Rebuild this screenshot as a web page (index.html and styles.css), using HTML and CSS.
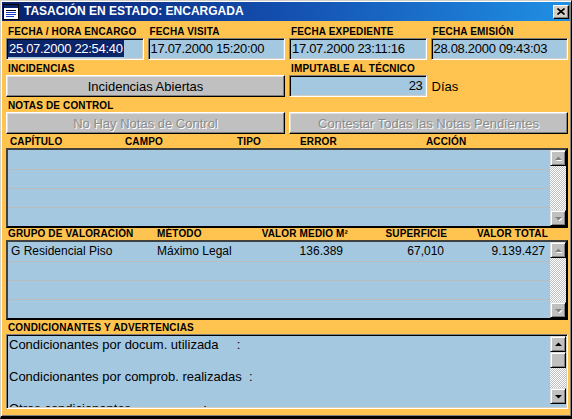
FILE: index.html
```html
<!DOCTYPE html>
<html lang="es">
<head>
<meta charset="utf-8">
<title>Tasación en estado: Encargada</title>
<link rel="stylesheet" href="styles.css">
</head>
<body>
<div class="window">
  <div class="titlebar">
    <svg class="app-icon" width="16" height="16" viewBox="0 0 16 16">
      <rect x="0.5" y="0.5" width="15" height="15" fill="#fff" stroke="#000"/>
      <rect x="1" y="1" width="14" height="3" fill="#0a246a"/>
      <rect x="3" y="6" width="10" height="1" fill="#000"/>
      <rect x="3" y="8" width="10" height="1" fill="#1c3cc8"/>
      <rect x="3" y="10" width="10" height="1" fill="#1c3cc8"/>
      <rect x="3" y="12" width="8" height="1" fill="#1c3cc8"/>
    </svg>
    <span class="title">TASACIÓN EN ESTADO: ENCARGADA</span>
    <div class="close-btn">
      <svg width="8" height="7" viewBox="0 0 8 7"><path d="M0.5 0.5 L7.5 6.5 M7.5 0.5 L0.5 6.5" stroke="#000" stroke-width="1.6" fill="none"/></svg>
    </div>
  </div>

  <div class="content">
    <div class="row4">
      <div class="field">
        <div class="label">FECHA / HORA ENCARGO</div>
        <div class="input date"><span class="selected">25.07.2000 22:54:40</span></div>
      </div>
      <div class="field">
        <div class="label">FECHA VISITA</div>
        <div class="input date">17.07.2000 15:20:00</div>
      </div>
      <div class="field">
        <div class="label">FECHA EXPEDIENTE</div>
        <div class="input date">17.07.2000 23:11:16</div>
      </div>
      <div class="field">
        <div class="label">FECHA EMISIÓN</div>
        <div class="input date">28.08.2000 09:43:03</div>
      </div>
    </div>

    <div class="row4 gap-top">
      <div class="field span2">
        <div class="label">INCIDENCIAS</div>
        <div class="btn">Incidencias Abiertas</div>
      </div>
      <div class="field">
        <div class="label">IMPUTABLE AL TÉCNICO</div>
        <div class="input date num">23</div>
      </div>
      <div class="field">
        <div class="label"></div>
        <div class="dias">Días</div>
      </div>
    </div>

    <div class="label gap-top">NOTAS DE CONTROL</div>
    <div class="row2">
      <div class="btn disabled">No Hay Notas de Control</div>
      <div class="btn disabled">Contestar Todas las Notas Pendientes</div>
    </div>

    <div class="grid-head head1">
      <span>CAPÍTULO</span><span>CAMPO</span><span>TIPO</span><span>ERROR</span><span>ACCIÓN</span>
    </div>
    <div class="listbox">
      <div class="rows">
        <div class="row"></div>
        <div class="row"></div>
        <div class="row"></div>
        <div class="row"></div>
      </div>
      <div class="vscroll">
        <div class="sbtn"><svg width="7" height="5" viewBox="0 0 7 5"><path d="M3.5 0.5 L7 4 L0 4 Z" class="arrow-off"/></svg></div>
        <div class="track"></div>
        <div class="sbtn"><svg width="7" height="5" viewBox="0 0 7 5"><path d="M0 1 L7 1 L3.5 4.5 Z" class="arrow-off"/></svg></div>
      </div>
    </div>

    <div class="grid-head head2">
      <span>GRUPO DE VALORACIÓN</span><span>MÉTODO</span><span class="r">VALOR MEDIO M²</span><span class="r">SUPERFICIE</span><span class="r">VALOR TOTAL</span>
    </div>
    <div class="listbox">
      <div class="rows">
        <div class="row data2">
          <span>G Residencial Piso</span><span>Máximo Legal</span><span class="r">136.389</span><span class="r">67,010</span><span class="r">9.139.427</span>
        </div>
        <div class="row"></div>
        <div class="row"></div>
        <div class="row"></div>
      </div>
      <div class="vscroll">
        <div class="sbtn"><svg width="7" height="5" viewBox="0 0 7 5"><path d="M3.5 0.5 L7 4 L0 4 Z" class="arrow-off"/></svg></div>
        <div class="track"></div>
        <div class="sbtn"><svg width="7" height="5" viewBox="0 0 7 5"><path d="M0 1 L7 1 L3.5 4.5 Z" class="arrow-off"/></svg></div>
      </div>
    </div>

    <div class="label gap-top2">CONDICIONANTES Y ADVERTENCIAS</div>
    <div class="memo">
      <div class="memo-text">Condicionantes por docum. utilizada     :

Condicionantes por comprob. realizadas  :

Otros condicionantes                    :</div>
      <div class="vscroll memo-scroll">
        <div class="sbtn"><svg width="7" height="5" viewBox="0 0 7 5"><path d="M3.5 0.5 L7 4 L0 4 Z" fill="#000"/></svg></div>
        <div class="sbtn thumb"></div>
        <div class="track"></div>
        <div class="sbtn"><svg width="7" height="5" viewBox="0 0 7 5"><path d="M0 1 L7 1 L3.5 4.5 Z" fill="#000"/></svg></div>
      </div>
    </div>
  </div>
</div>
</body>
</html>
```

FILE: styles.css
```css
* { box-sizing: border-box; }

html, body {
  margin: 0;
  padding: 0;
  background: #000;
}

body {
  font-family: "Liberation Sans", Arial, sans-serif;
  color: #000;
}

.window {
  width: 572px;
  height: 419px;
  display: flex;
  flex-direction: column;
  background: #ffc450;
  border-style: solid;
  border-width: 1px 1px 3px 1px;
  border-color: #d4d0c8 #000 #000 #d4d0c8;
  box-shadow: inset 1px 1px 0 #fff, inset -1px -1px 0 #808080;
  padding: 1px 1px 1px 1px;
}

.titlebar {
  height: 19px;
  flex: none;
  display: flex;
  align-items: center;
  background: linear-gradient(to right, #08216a 0%, #0d3690 25%, #1450b0 50%, #2090e4 100%);
  padding-left: 1px;
}

.app-icon { flex: none; }

.title {
  margin-left: 5px;
  color: #fff;
  font: bold 12px/19px "Liberation Sans", Arial, sans-serif;
  white-space: nowrap;
  flex: 1;
}

.close-btn {
  width: 16px;
  height: 14px;
  margin-right: 1px;
  background: #d4d0c8;
  border: 1px solid;
  border-color: #fff #000 #000 #fff;
  box-shadow: inset -1px -1px 0 #808080;
  display: flex;
  align-items: center;
  justify-content: center;
}

.content {
  flex: 1;
  display: flex;
  flex-direction: column;
  padding: 5px 2px 0 4px;
}

.label {
  font: bold 10px/12px "Liberation Sans", Arial, sans-serif;
  letter-spacing: 0.15px;
  height: 12px;
  padding-left: 2px;
  white-space: nowrap;
}

.gap-top { margin-top: 3px; }
.gap-top2 { margin-top: 2px; }

.row4 {
  display: grid;
  grid-template-columns: repeat(4, 1fr);
  column-gap: 4px;
}

.span2 { grid-column: span 2; }

.row2 {
  display: grid;
  grid-template-columns: 1fr 1fr;
  column-gap: 4px;
}

.input {
  height: 22px;
  background: #a4c8e0;
  border: 1px solid;
  border-color: #808080 #fff #fff #808080;
  box-shadow: inset 1px 1px 0 #000, inset -1px -1px 0 #d4d0c8;
  padding: 1px 1px 0 1px;
  white-space: nowrap;
  overflow: hidden;
}

.date {
  font: 13px/18px "Liberation Sans", Arial, sans-serif;
  letter-spacing: -0.3px;
  padding-left: 2px;
}

.num {
  text-align: right;
  padding-right: 3px;
}

.selected {
  display: inline-block;
  background: #0a246a;
  color: #fff;
  line-height: 17px;
  margin-left: -1px;
  padding: 0 1px;
}

.btn {
  height: 22px;
  background: #c0c0c0;
  border: 1px solid;
  border-color: #fff #000 #000 #fff;
  box-shadow: inset -1px -1px 0 #808080, inset 1px 1px 0 #dfdfdf;
  font: 13px/18px "Liberation Sans", Arial, sans-serif;
  text-align: center;
  padding-top: 2px;
  white-space: nowrap;
}

.btn.disabled {
  color: #8c8c8c;
  text-shadow: 1px 1px 0 #fff;
}

.dias {
  font: 13px/18px "Liberation Sans", Arial, sans-serif;
  padding: 3px 0 0 1px;
}

.grid-head {
  display: grid;
  height: 14px;
  padding-top: 2px;
  font: bold 10px/12px "Liberation Sans", Arial, sans-serif;
  letter-spacing: 0.15px;
  white-space: nowrap;
}

.head1 {
  grid-template-columns: 115px 112px 63px 126px 1fr;
  padding-left: 4px;
}

.head2 {
  height: 12px;
  padding-top: 0;
  grid-template-columns: 149px 99px 92px 99px 101px;
  padding-left: 2px;
}

.r { text-align: right; }

.listbox {
  height: 80px;
  flex: none;
  display: flex;
  background: #a4c8e0;
  border: 2px solid;
  border-color: #404040 #000 #000 #404040;
}

.rows {
  flex: 1;
  display: flex;
  flex-direction: column;
}

.row {
  height: 19px;
  flex: none;
}

.row + .row { border-top: 1px solid #bcbcbc; }

.data2 {
  display: grid;
  grid-template-columns: 146px 99px 87px 101px 101px;
  font: 12px/18px "Liberation Sans", Arial, sans-serif;
  padding-left: 3px;
  white-space: nowrap;
}

.vscroll {
  width: 16px;
  flex: none;
  display: flex;
  flex-direction: column;
}

.sbtn {
  width: 16px;
  height: 16px;
  flex: none;
  background: #c0c0c0;
  border: 1px solid;
  border-color: #dfdfdf #000 #000 #dfdfdf;
  box-shadow: inset 1px 1px 0 #fff, inset -1px -1px 0 #808080;
  display: flex;
  align-items: center;
  justify-content: center;
}

.track {
  flex: 1;
  background-color: #fff;
  background-image: conic-gradient(#c0c0c0 0 25%, #fff 0 50%, #c0c0c0 0 75%, #fff 0);
  background-size: 2px 2px;
}

.arrow-off {
  fill: #808080;
  filter: drop-shadow(1px 1px 0 #fff);
}

.memo {
  height: 75px;
  flex: none;
  display: flex;
  background: #a4c8e0;
  border: 1px solid;
  border-color: #808080 #fff #fff #808080;
  box-shadow: inset 1px 1px 0 #000, inset -1px -1px 0 #d4d0c8;
  padding: 1px 1px 1px 1px;
  overflow: hidden;
}

.memo-text {
  flex: 1;
  padding: 1px 0 0 1px;
  font: 13px/16px "Liberation Sans", Arial, sans-serif;
  white-space: pre;
  overflow: hidden;
}

.memo-scroll {
  padding-bottom: 3px;
}
```
